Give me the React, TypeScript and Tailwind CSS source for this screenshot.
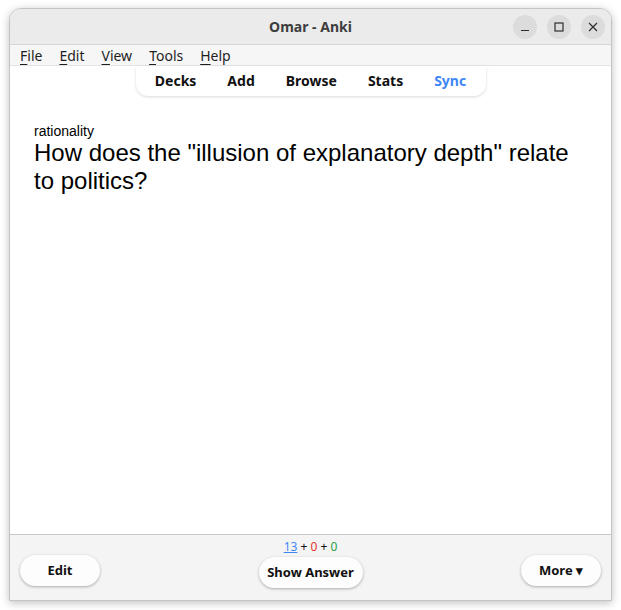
import React from 'react';

const ui = { fontFamily: '"Noto Sans", "Open Sans", sans-serif' };

const menus = ['File', 'Edit', 'View', 'Tools', 'Help'];
const links = ['Decks', 'Add', 'Browse', 'Stats', 'Sync'];

const Circle: React.FC<{ children: React.ReactNode }> = ({ children }) => (
  <div className="w-[24px] h-[24px] rounded-full bg-[#dcdcdc] flex items-center justify-center text-[#2e2e2e]">
    {children}
  </div>
);

const App: React.FC = () => {
  return (
    <div className="w-[621px] h-[610px] bg-white pt-[8px] pl-[9px] pr-[9px] pb-[9px]" style={ui}>
      <div className="w-full h-full flex flex-col rounded-t-[12px] border border-[#c4c4c4] shadow-[0_2px_8px_rgba(0,0,0,0.25)] overflow-hidden bg-white">
        {/* title bar */}
        <div className="h-[36px] bg-[#ebebeb] flex items-center relative border-b border-[#d6d6d6]">
          <div className="flex-1 text-center text-[14px] font-bold text-[#3d3d3d]">Omar - Anki</div>
          <div className="absolute right-[6px] top-[6px] flex gap-[10px]">
            <Circle>
              <svg width="10" height="10" viewBox="0 0 10 10"><line x1="1" y1="8.5" x2="9" y2="8.5" stroke="currentColor" strokeWidth="1.2" /></svg>
            </Circle>
            <Circle>
              <svg width="10" height="10" viewBox="0 0 10 10"><rect x="1" y="1" width="8" height="8" fill="none" stroke="currentColor" strokeWidth="1.2" /></svg>
            </Circle>
            <Circle>
              <svg width="10" height="10" viewBox="0 0 10 10"><path d="M1 1L9 9M9 1L1 9" stroke="currentColor" strokeWidth="1.2" /></svg>
            </Circle>
          </div>
        </div>

        {/* menu bar */}
        <div className="h-[21px] bg-[#f6f6f6] flex items-center gap-[17px] pl-[10px] text-[14px] text-[#1e1e1e] border-b border-[#e4e4e4]">
          {menus.map((m) => (
            <span key={m}>
              <span className="underline underline-offset-[3px]">{m[0]}</span>
              {m.slice(1)}
            </span>
          ))}
        </div>

        {/* main */}
        <div className="flex-1 flex flex-col bg-white">
          <div className="flex justify-center">
            <div className="w-[350px] h-[30px] pb-[2px] bg-white rounded-b-[12px] shadow-[0_1px_3px_rgba(0,0,0,0.15)] flex items-center justify-center gap-[31px] text-[14px] font-bold text-[#111]">
              {links.map((l) => (
                <span key={l} className={l === 'Sync' ? 'text-[#3f87f5]' : ''}>{l}</span>
              ))}
            </div>
          </div>
          <div className="pl-[24px] pr-[20px] pt-[27px] text-black" style={{ fontFamily: '"Liberation Sans", Arial, sans-serif' }}>
            <div className="text-[14px] leading-[16px]">rationality</div>
            <div className="text-[24px] leading-[28px]">How does the "illusion of explanatory depth" relate to politics?</div>
          </div>
        </div>

        {/* bottom bar */}
        <div className="h-[66px] bg-[#f4f4f4] border-t border-[#c8c8c8] flex items-start justify-between px-[10px]">
          <button className="mt-[20px] w-[80px] h-[31px] rounded-full bg-[#fdfdfd] shadow-[0_1px_3px_rgba(0,0,0,0.3)] text-[13px] font-bold text-[#111]">Edit</button>
          <div className="flex flex-col items-center">
            <div className="mt-[5px] text-[12px] leading-[14px]">
              <span className="text-[#3f87f5] underline">13</span>
              <span className="text-[#111]"> + </span>
              <span className="text-[#e5342d]">0</span>
              <span className="text-[#111]"> + </span>
              <span className="text-[#2a9d4a]">0</span>
            </div>
            <button className="mt-[3px] w-[104px] h-[31px] rounded-full bg-[#fdfdfd] shadow-[0_1px_3px_rgba(0,0,0,0.3)] text-[13px] font-bold text-[#111]">Show Answer</button>
          </div>
          <button className="mt-[20px] w-[80px] h-[31px] rounded-full bg-[#fdfdfd] shadow-[0_1px_3px_rgba(0,0,0,0.3)] text-[13px] font-bold text-[#111]">More ▾</button>
        </div>
      </div>
    </div>
  );
};

export default App;
